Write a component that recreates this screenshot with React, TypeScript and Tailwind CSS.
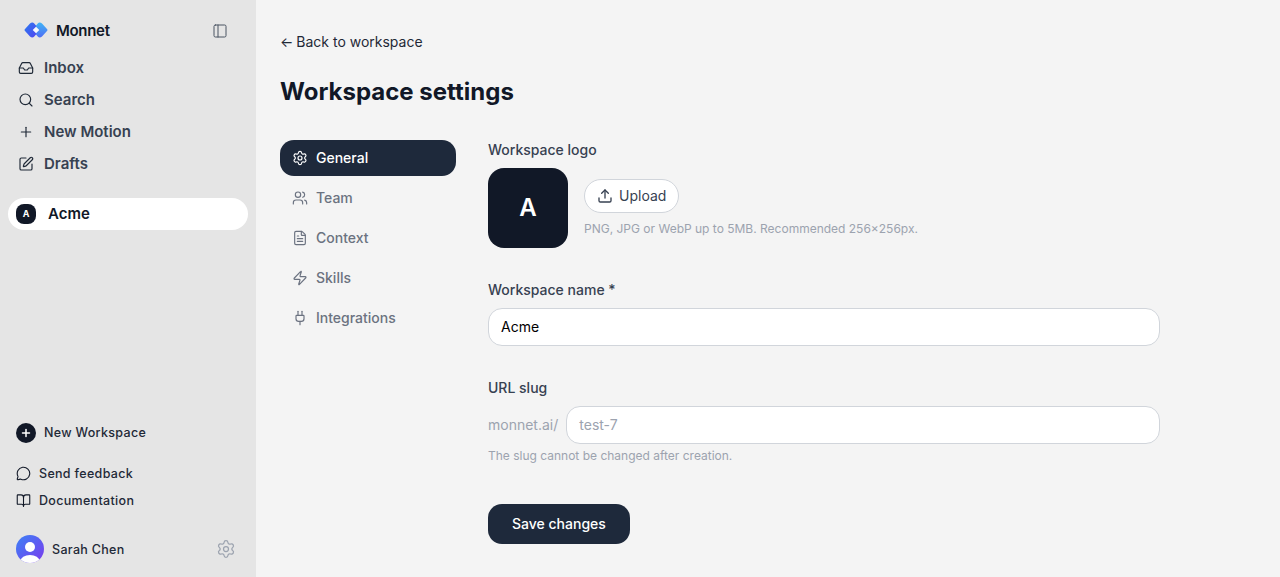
import {
  BookOpen,
  FileText,
  Inbox,
  MessageCircle,
  PanelLeft,
  Plug,
  Plus,
  Search,
  Settings,
  SquarePen,
  Upload,
  Users,
  Zap,
} from "lucide-react";

const NAV = [
  { label: "Inbox", icon: Inbox },
  { label: "Search", icon: Search },
  { label: "New Motion", icon: Plus },
  { label: "Drafts", icon: SquarePen },
];

const TABS = [
  { label: "Team", icon: Users },
  { label: "Context", icon: FileText },
  { label: "Skills", icon: Zap },
  { label: "Integrations", icon: Plug },
];

function Logo() {
  return (
    <svg width="24" height="16" viewBox="0 0 24 16" fill="none">
      <defs>
        <linearGradient id="lg" x1="0" y1="0" x2="1" y2="1">
          <stop offset="0" stopColor="#2b7cf0" />
          <stop offset="1" stopColor="#4f46f0" />
        </linearGradient>
        <linearGradient id="lr" x1="0" y1="0" x2="0" y2="1">
          <stop offset="0" stopColor="#3fb4f5" />
          <stop offset="1" stopColor="#4f6df5" />
        </linearGradient>
      </defs>
      <path d="M8.5 8 12 4.5 15.5 8 12 11.5z" fill="#f6f8ff" />
      <path
        d="M0.8 7.2 6 1.6Q7 .5 8.4 .5Q9.4 .5 10 1.2L12 3.6V4.7L8.7 8 12 11.3V12.4L10 14.8Q9.4 15.5 8.4 15.5Q7 15.5 6 14.4L0.8 8.8Q.1 8 .8 7.2z"
        fill="url(#lg)"
      />
      <path
        d="M23.2 7.2 18 1.6Q17 .5 15.6 .5Q14.6 .5 14 1.2L12 3.6V4.7L15.3 8 12 11.3V12.4L14 14.8Q14.6 15.5 15.6 15.5Q17 15.5 18 14.4L23.2 8.8Q23.9 8 23.2 7.2z"
        fill="url(#lr)"
      />
    </svg>
  );
}

function Sidebar() {
  return (
    <aside className="flex h-[577px] w-64 shrink-0 flex-col bg-[#e5e5e5]">
      <div className="mt-4 flex h-[30px] items-center justify-between pl-6 pr-[28px]">
        <div className="flex items-center gap-2">
          <span className="-mt-0.5 flex">
            <Logo />
          </span>
          <span className="text-[15px] font-semibold tracking-[-0.02em] text-[#111827]">Monnet</span>
        </div>
        <PanelLeft className="size-4 text-[#4b5563]" strokeWidth={1.5} />
      </div>
      <nav className="mt-[6px] flex flex-col">
        {NAV.map((item) => (
          <div key={item.label} className="flex h-8 items-center gap-[10px] pl-[18px]">
            <item.icon className="size-4 text-[#1f2937]" strokeWidth={1.75} />
            <span className="text-[15px] font-semibold text-[#374151]">{item.label}</span>
          </div>
        ))}
      </nav>
      <div className="mx-2 mt-[18px] flex h-8 items-center gap-3 rounded-full bg-white pl-2">
        <span className="flex size-5 items-center justify-center rounded-lg bg-[#111827] text-[9px] font-bold text-white">
          A
        </span>
        <span className="text-[15px] font-semibold text-[#111827]">Acme</span>
      </div>
      <div className="mt-auto flex flex-col">
        <div className="flex items-center gap-2 pl-4">
          <span className="flex size-5 items-center justify-center rounded-full bg-[#111827] text-white">
            <Plus className="size-3" strokeWidth={3} />
          </span>
          <span className="text-[12.5px] font-medium tracking-[0.025em] text-[#1f2937]">New Workspace</span>
        </div>
        <div className="mt-[17px] flex h-[27px] items-center gap-2 pl-4">
          <MessageCircle className="size-[15px] text-[#111827]" strokeWidth={1.75} />
          <span className="mt-0.5 text-[12.5px] font-medium tracking-[0.025em] text-[#1f2937]">Send feedback</span>
        </div>
        <div className="flex h-[27px] items-center gap-2 pl-4">
          <BookOpen className="size-[15px] text-[#111827]" strokeWidth={1.75} />
          <span className="mt-0.5 text-[12.5px] font-medium tracking-[0.025em] text-[#1f2937]">Documentation</span>
        </div>
        <div className="mb-[14px] mt-[21px] flex items-center justify-between pl-4 pr-5">
          <div className="flex items-center gap-2">
            <svg width="28" height="28" viewBox="0 0 28 28">
              <defs>
                <linearGradient id="av" x1="0" y1="0" x2="1" y2="1">
                  <stop offset="0" stopColor="#3b82f6" />
                  <stop offset="1" stopColor="#7c3aed" />
                </linearGradient>
                <clipPath id="avc">
                  <circle cx="14" cy="14" r="14" />
                </clipPath>
              </defs>
              <g clipPath="url(#avc)">
                <rect width="28" height="28" fill="url(#av)" />
                <circle cx="14" cy="12" r="5" fill="#fff" />
                <ellipse cx="14" cy="26" rx="9.5" ry="6" fill="#fff" />
              </g>
            </svg>
            <span className="mt-0.5 text-[12.5px] font-medium tracking-[0.025em] text-[#1f2937]">Sarah Chen</span>
          </div>
          <Settings className="size-5 text-[#9ca3af]" strokeWidth={1.5} />
        </div>
      </div>
    </aside>
  );
}

function Tabs() {
  return (
    <div className="flex w-44 shrink-0 flex-col gap-1">
      <div className="flex h-9 items-center gap-2 rounded-[14px] bg-[#1e293b] pl-[12px] text-white">
        <Settings className="size-4" strokeWidth={1.75} />
        <span className="text-sm font-medium">General</span>
      </div>
      {TABS.map((tab) => (
        <div key={tab.label} className="flex h-9 items-center gap-2 pl-[12px] text-[#6b7280]">
          <tab.icon className="size-4" strokeWidth={1.75} />
          <span className="text-sm font-medium">{tab.label}</span>
        </div>
      ))}
    </div>
  );
}

function Form() {
  return (
    <div className="ml-8 flex w-[672px] flex-col">
      <label className="text-sm font-medium leading-5 text-[#374151]">Workspace logo</label>
      <div className="mt-2 flex items-center gap-4">
        <div className="flex size-20 items-center justify-center rounded-2xl bg-[#111827] text-2xl font-semibold text-white">
          A
        </div>
        <div className="flex flex-col gap-2">
          <button className="flex h-[34px] w-fit items-center gap-[6px] rounded-full border border-[#d1d5db] bg-white px-3 text-sm text-[#374151]">
            <Upload className="size-4" strokeWidth={2} />
            Upload
          </button>
          <p className="text-xs leading-4 text-[#9ca3af]">
            PNG, JPG or WebP up to 5MB. Recommended 256×256px.
          </p>
        </div>
      </div>
      <label className="mt-8 text-sm font-medium leading-5 text-[#374151]">Workspace name *</label>
      <div className="mt-2 flex h-[38px] items-center rounded-[14px] border border-[#d1d5db] bg-white px-3 text-sm text-black">
        Acme
      </div>
      <label className="mt-8 text-sm font-medium leading-5 text-[#374151]">URL slug</label>
      <div className="mt-2 flex items-center gap-2">
        <span className="text-sm text-[#9ca3af]">monnet.ai/</span>
        <div className="flex h-[38px] flex-1 items-center rounded-[14px] border border-[#d1d5db] bg-white px-3 text-sm text-[#9ca3af]">
          test-7
        </div>
      </div>
      <p className="mt-1 text-xs leading-4 text-[#9ca3af]">The slug cannot be changed after creation.</p>
      <button className="mt-10 h-10 w-fit rounded-[14px] bg-[#1e293b] px-6 text-sm font-medium text-white">
        Save changes
      </button>
    </div>
  );
}

export default function App() {
  return (
    <div className="flex h-[577px] overflow-hidden bg-[#f4f4f4] font-['Inter',sans-serif]">
      <Sidebar />
      <main className="flex-1 pl-6 pt-8">
        <div className="text-sm leading-5 text-[#1f2937]">
          <span className="mr-[-1px]">←</span> Back to workspace
        </div>
        <h1 className="mt-6 text-2xl font-bold leading-8 text-[#111827]">Workspace settings</h1>
        <div className="mt-8 flex">
          <Tabs />
          <Form />
        </div>
      </main>
    </div>
  );
}
